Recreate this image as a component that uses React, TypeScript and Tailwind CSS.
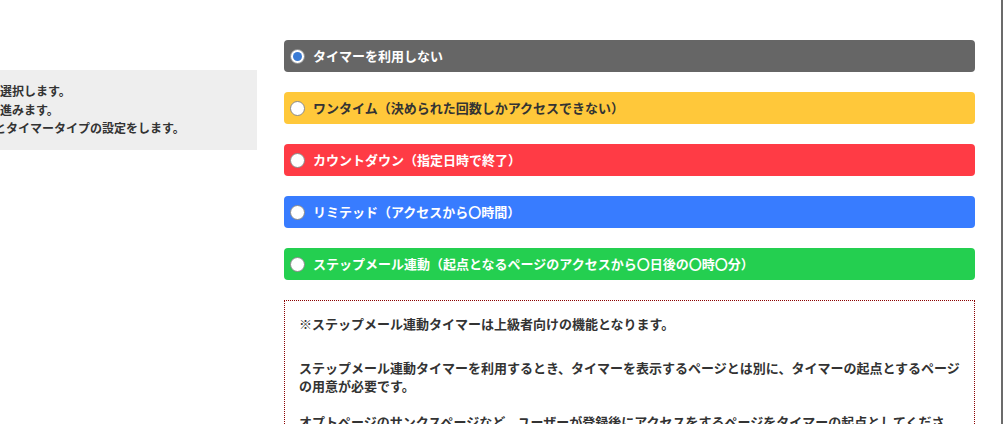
import React from "react";

const font = { fontFamily: '"Noto Sans CJK JP", "Noto Sans", sans-serif' };

type Opt = { label: string; bg: string; text: string; checked?: boolean };

const opts: Opt[] = [
  { label: "タイマーを利用しない", bg: "bg-[#666666]", text: "text-white", checked: true },
  { label: "ワンタイム（決められた回数しかアクセスできない）", bg: "bg-[#ffc83a]", text: "text-[#333333]" },
  { label: "カウントダウン（指定日時で終了）", bg: "bg-[#ff3b45]", text: "text-white" },
  { label: "リミテッド（アクセスから〇時間）", bg: "bg-[#387cff]", text: "text-white" },
  { label: "ステップメール連動（起点となるページのアクセスから〇日後の〇時〇分）", bg: "bg-[#24cf50]", text: "text-white" },
];

function Radio({ checked }: { checked?: boolean }) {
  return (
    <span className="w-[15px] h-[15px] rounded-full bg-white border border-[#8a8a8a] flex items-center justify-center shrink-0">
      {checked && <span className="w-[9px] h-[9px] rounded-full bg-[#3a7bd5]" />}
    </span>
  );
}

export default function App() {
  return (
    <div className="w-[1007px] h-[424px] bg-white flex overflow-hidden text-[#333333]" style={font}>
      <div className="w-[257px] shrink-0 pt-[70px]">
        <div className="h-[80px] bg-[#eeeeee] overflow-hidden pt-[12px] text-[12px] leading-[18.5px] font-semibold whitespace-nowrap">
          <div>選択します。</div>
          <div>進みます。</div>
          <div className="ml-[-6px]">とタイマータイプの設定をします。</div>
        </div>
      </div>
      <div className="w-[691px] shrink-0 ml-[27px] pt-[40px] flex flex-col gap-[20px]">
        {opts.map((o) => (
          <div key={o.label} className={`h-[32px] shrink-0 rounded-[4px] flex items-center pl-[6px] gap-[8px] ${o.bg}`}>
            <Radio checked={o.checked} />
            <span className={`text-[13px] font-bold ${o.text}`}>{o.label}</span>
          </div>
        ))}
        <div className="shrink-0 border border-dotted border-[#8b0000] px-[14px] pt-[14px] text-[13px] leading-[18px] font-semibold">
          <p className="mb-[26px]">※ステップメール連動タイマーは上級者向けの機能となります。</p>
          <p>
            ステップメール連動タイマーを利用するとき、タイマーを表示するページとは別に、タイマーの起点とするページの用意が必要です。
          </p>
          <p className="mt-[18px]">
            オプトページのサンクスページなど、ユーザーが登録後にアクセスをするページをタイマーの起点としてください。
          </p>
        </div>
      </div>
      <div className="ml-[26px] w-[2px] h-full bg-[#6b6b6b] shrink-0" />
    </div>
  );
}
